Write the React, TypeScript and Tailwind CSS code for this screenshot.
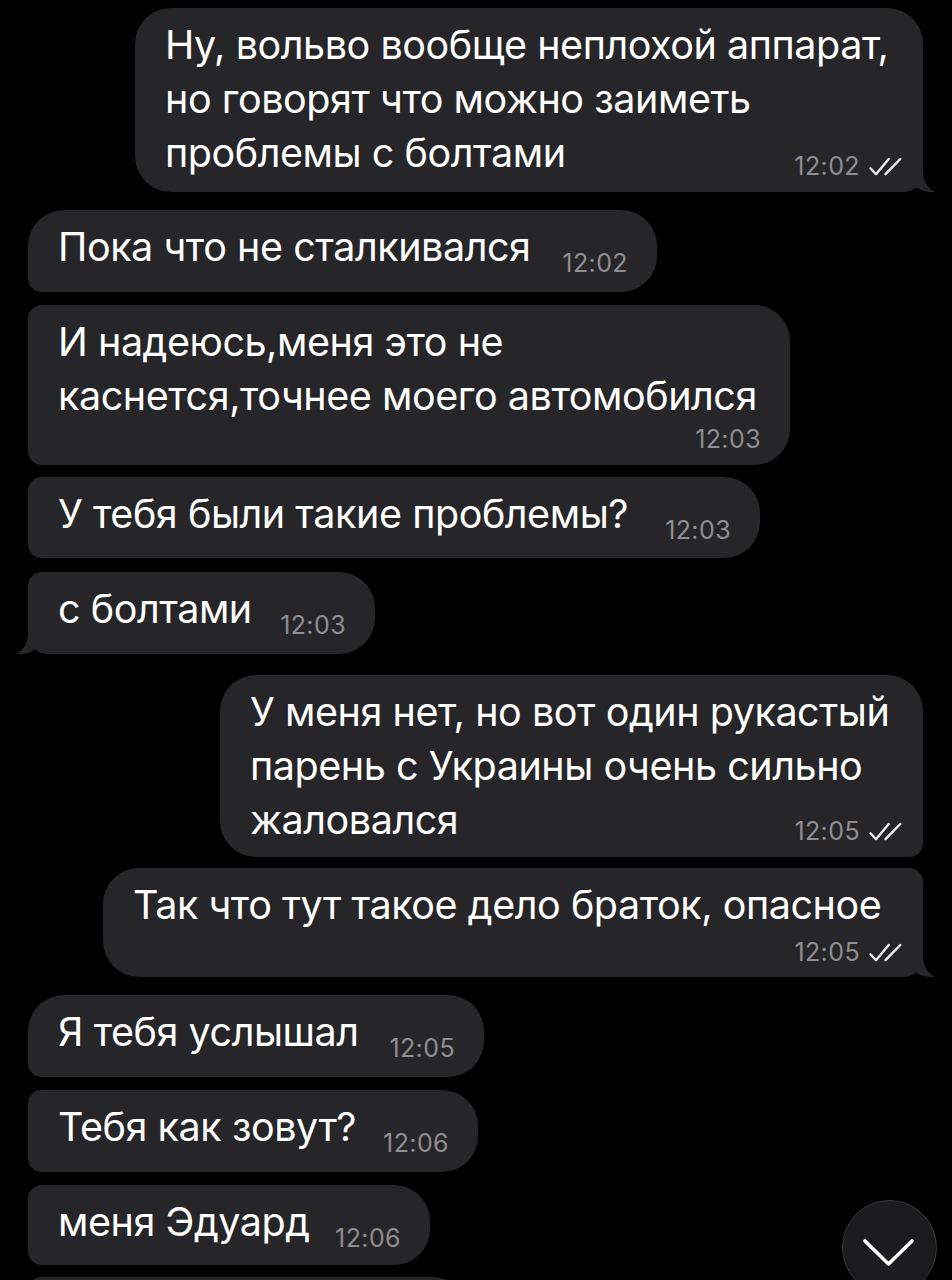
import React from 'react';

type Msg = {
  out?: boolean;
  lines: string[];
  time: string;
  w: string;
  corners: string;
  mt: string;
  pb: string;
  timeRow?: string;
  timeMb?: string;
  tail?: boolean;
};

const messages: Msg[] = [
  {
    out: true,
    lines: ['Ну, вольво вообще неплохой аппарат,', 'но говорят что можно заиметь', 'проблемы с болтами'],
    time: '12:02',
    w: 'w-[788px]',
    corners: 'rounded-[36px] rounded-br-[20px]',
    mt: 'mt-[8px]',
    pb: 'pb-[12px]',
    timeMb: 'mb-[2px]',
    tail: true,
  },
  { lines: ['Пока что не сталкивался'], time: '12:02', w: 'w-[629px]', corners: 'rounded-[36px] rounded-bl-[14px]', mt: 'mt-[18px]', pb: 'pb-[18px]', timeMb: 'mb-[-1px]' },
  {
    lines: ['И надеюсь,меня это не', 'каснется,точнее моего автомобился'],
    time: '12:03',
    w: 'w-[762px]',
    corners: 'rounded-[36px] rounded-l-[14px]',
    mt: 'mt-[13px]',
    pb: 'pb-[14px]',
    timeRow: 'mt-[4px]',
  },
  { lines: ['У тебя были такие проблемы?'], time: '12:03', w: 'w-[732px]', corners: 'rounded-[36px] rounded-l-[14px]', mt: 'mt-[12px]', pb: 'pb-[17px]', timeMb: 'mb-[-1px]' },
  { lines: ['с болтами'], time: '12:03', w: 'w-[347px]', corners: 'rounded-[36px] rounded-tl-[14px] rounded-bl-[20px]', mt: 'mt-[14px]', pb: 'pb-[18px]', timeMb: 'mb-[-1px]', tail: true },
  {
    out: true,
    lines: ['У меня нет, но вот один рукастый', 'парень с Украины очень сильно', 'жаловался'],
    time: '12:05',
    w: 'w-[703px]',
    corners: 'rounded-[36px] rounded-br-[14px]',
    mt: 'mt-[21px]',
    pb: 'pb-[10px]',
    timeMb: 'mb-[4px]',
  },
  {
    out: true,
    lines: ['Так что тут такое дело браток, опасное'],
    time: '12:05',
    w: 'w-[820px]',
    corners: 'rounded-[36px] rounded-tr-[14px] rounded-br-[20px]',
    mt: 'mt-[11px]',
    pb: 'pb-[13px]',
    timeRow: 'mt-[8px]',
    tail: true,
  },
  { lines: ['Я тебя услышал'], time: '12:05', w: 'w-[456px]', corners: 'rounded-[36px] rounded-bl-[14px]', mt: 'mt-[18px]', pb: 'pb-[18px]', timeMb: 'mb-[-1px]' },
  { lines: ['Тебя как зовут?'], time: '12:06', w: 'w-[450px]', corners: 'rounded-[36px] rounded-l-[14px]', mt: 'mt-[13px]', pb: 'pb-[18px]', timeMb: 'mb-[-1px]' },
  { lines: ['меня Эдуард'], time: '12:06', w: 'w-[402px]', corners: 'rounded-[36px] rounded-l-[14px]', mt: 'mt-[13px]', pb: 'pb-[16px]', timeMb: 'mb-[-1px]' },
];

function Checks() {
  return (
    <svg width="34" height="19" viewBox="0 0 34 19" fill="none" stroke="#ececee" strokeWidth="2.4" strokeLinecap="round" strokeLinejoin="round">
      <path d="M2.5 11.3 L8 17.2 L20.7 2" />
      <path d="M17.5 17.2 L32.3 2" />
    </svg>
  );
}

function Tail({ out }: { out?: boolean }) {
  return (
    <svg
      width="34"
      height="30"
      viewBox="0 0 34 30"
      className={out ? 'absolute bottom-0 right-[-14px]' : 'absolute bottom-0 left-[-14px] -scale-x-100'}
    >
      <path d="M0 0 H20 V8 C20 18 23 25 32 30 C25 30.6 19 29 14 26 H0 Z" fill="#262628" />
    </svg>
  );
}

function Time({ m, className = '' }: { m: Msg; className?: string }) {
  return (
    <div className={`flex shrink-0 items-center gap-[8px] text-[25px] leading-[24px] tracking-[0.4px] text-[#8d8d92] ${className}`}>
      <span>{m.time}</span>
      {m.out && <Checks />}
    </div>
  );
}

function Bubble({ m }: { m: Msg }) {
  const head = m.timeRow ? m.lines : m.lines.slice(0, -1);
  const last = m.lines[m.lines.length - 1];
  return (
    <div className={`flex ${m.out ? 'justify-end pr-[29px]' : 'justify-start pl-[28px]'} ${m.mt}`}>
      <div className={`relative bg-[#262628] pt-[10px] text-white ${m.out ? 'pl-[30px] pr-[21px]' : 'pl-[30px] pr-[29px]'} ${m.w} ${m.corners} ${m.pb}`}>
        {head.map((l) => (
          <div key={l} className="whitespace-nowrap text-[39.5px] leading-[54px] tracking-[-0.45px]">
            {l}
          </div>
        ))}
        {m.timeRow ? (
          <div className={`flex h-[24px] justify-end ${m.timeRow}`}>
            <Time m={m} />
          </div>
        ) : (
          <div className="flex items-end justify-between">
            <span className="whitespace-nowrap text-[39.5px] leading-[54px] tracking-[-0.45px]">{last}</span>
            <Time m={m} className={m.timeMb} />
          </div>
        )}
        {m.tail && <Tail out={m.out} />}
      </div>
    </div>
  );
}

export default function App() {
  return (
    <div className="relative h-[1280px] w-[952px] overflow-hidden bg-black font-[Inter,Roboto,sans-serif]">
      <div className="flex flex-col">
        {messages.map((m, i) => (
          <Bubble key={i} m={m} />
        ))}
        <div className="mt-[12px] flex pl-[28px]">
          <div className="h-[70px] w-[440px] rounded-[36px] rounded-l-[14px] bg-[#262628]" />
        </div>
      </div>

      <div className="absolute left-[842px] top-[1200px] flex h-[95px] w-[95px] justify-center rounded-full border border-[#3a3a3c] bg-[#1c1c1e]">
        <svg width="95" height="95" viewBox="0 0 95 95" fill="none" stroke="#ffffff" strokeWidth="3.6" strokeLinecap="round" strokeLinejoin="round" className="shrink-0">
          <path d="M23 40 L46.5 63 L70 40" />
        </svg>
      </div>
    </div>
  );
}
